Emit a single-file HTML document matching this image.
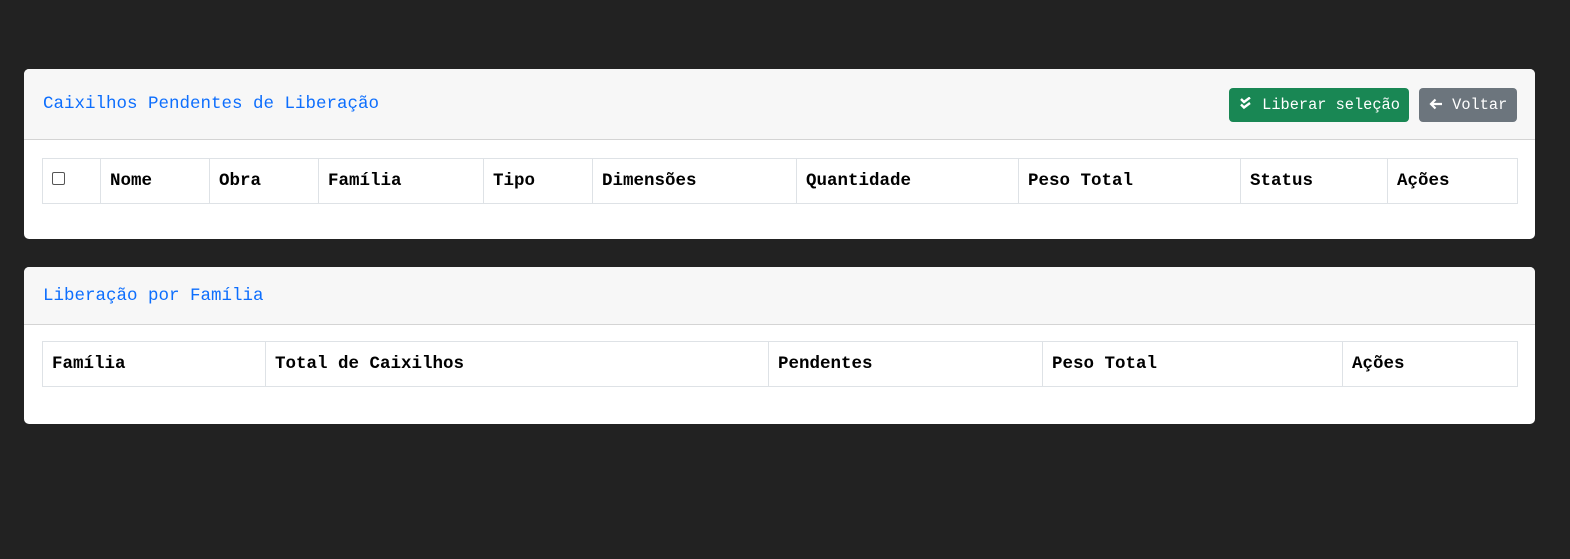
<!DOCTYPE html>
<html><head><meta charset="utf-8"><style>
body{margin:0;background:#222;width:1570px;height:559px;font-family:"Liberation Mono","DejaVu Sans Mono",monospace;}
.card{position:absolute;left:24px;width:1511px;background:#fff;border-radius:5px;overflow:hidden}
.hd{background:#f7f7f7;border-bottom:1px solid #d4d4d4;position:relative;box-sizing:border-box}
.title{position:absolute;left:19px;color:#0d6efd;font-size:17.5px}
table{position:absolute;left:18px;border-collapse:collapse;table-layout:fixed}
td{border:1px solid #dee2e6;height:45px;padding:0 0 0 9px;font-weight:bold;font-size:17.5px;color:#000;box-sizing:border-box}
.btn{position:absolute;top:19px;height:34px;border-radius:4px;color:#fff;font-size:15.3px;line-height:34px;box-sizing:border-box;padding-left:10px}
</style></head><body>
<div class="card" style="top:69px;height:170px">
 <div class="hd" style="height:71px">
  <div class="title" style="top:25px">Caixilhos Pendentes de Liberação</div>
  <div class="btn" style="left:1205px;width:180px;background:#198754"><svg width="14" height="14" viewBox="0 0 14 14" style="vertical-align:-2px"><path d="M2 2l3 3 6-4.5M2 7.5l3 3 6-4.5" stroke="#fff" stroke-width="2.4" fill="none"/></svg> Liberar seleção</div>
  <div class="btn" style="left:1395px;width:98px;background:#6c757d"><svg width="14" height="12" viewBox="0 0 14 12" style="vertical-align:-1px"><path d="M13 6H2M6.5 1.5L2 6l4.5 4.5" stroke="#fff" stroke-width="2.2" fill="none"/></svg> Voltar</div>
 </div>
 <table style="top:89px;width:1475px"><tr>
  <td style="width:58px"><div style="width:11px;height:11px;border:1px solid #555;border-radius:2px;margin-top:-6px"></div></td>
  <td style="width:109px">Nome</td><td style="width:109px">Obra</td><td style="width:165px">Família</td><td style="width:109px">Tipo</td><td style="width:204px">Dimensões</td><td style="width:222px">Quantidade</td><td style="width:222px">Peso Total</td><td style="width:147px">Status</td><td style="width:130px">Ações</td>
 </tr></table>
</div>
<div class="card" style="top:267px;height:157px">
 <div class="hd" style="height:58px">
  <div class="title" style="top:19px">Liberação por Família</div>
 </div>
 <table style="top:74px;width:1475px"><tr>
  <td style="width:223px">Família</td><td style="width:503px">Total de Caixilhos</td><td style="width:274px">Pendentes</td><td style="width:300px">Peso Total</td><td style="width:175px">Ações</td>
 </tr></table>
</div>
</body></html>
